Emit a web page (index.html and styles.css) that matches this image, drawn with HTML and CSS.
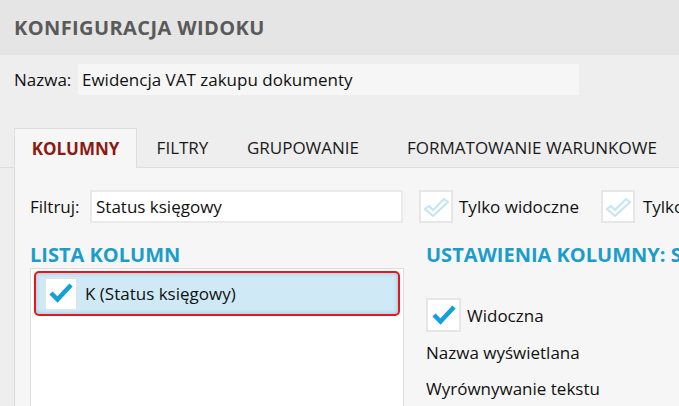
FILE: index.html
```html
<!DOCTYPE html>
<html lang="pl">
<head>
<meta charset="utf-8">
<link rel="stylesheet" href="styles.css">
</head>
<body>
<div class="header"><h1 class="title">KONFIGURACJA WIDOKU</h1></div>
<div class="name-row">
  <span class="label name-label">Nazwa:</span>
  <div class="name-input">Ewidencja VAT zakupu dokumenty</div>
</div>
<div class="tabs">
  <div class="tab active">KOLUMNY</div>
  <div class="tab">FILTRY</div>
  <div class="tab">GRUPOWANIE</div>
  <div class="tab last">FORMATOWANIE WARUNKOWE</div>
</div>
<div class="panel">
  <div class="filter-row">
    <span class="label filter-label">Filtruj:</span>
    <div class="filter-input">Status księgowy</div>
    <div class="checkbox empty">
      <svg viewBox="0 0 34 33" width="34" height="33"><path d="M6 19 L10 16 L14 20 L25 9 L29 12 L14 26 Z" fill="none" stroke="#c2e5f5" stroke-width="2" stroke-linejoin="miter"/></svg>
    </div>
    <span class="cb-label">Tylko widoczne</span>
    <div class="checkbox empty second">
      <svg viewBox="0 0 34 33" width="34" height="33"><path d="M6 19 L10 16 L14 20 L25 9 L29 12 L14 26 Z" fill="none" stroke="#c2e5f5" stroke-width="2" stroke-linejoin="miter"/></svg>
    </div>
    <span class="cb-label">Tylko</span>
  </div>
  <div class="columns">
    <div class="col-left">
      <h2 class="section">LISTA KOLUMN</h2>
      <div class="list">
        <div class="list-row">
          <div class="checkbox small">
            <svg viewBox="0 0 32 32" width="32" height="32"><path d="M6 15 L12.5 21.5 L26 7" fill="none" stroke="#139fdc" stroke-width="4.5"/></svg>
          </div>
          <span class="row-text">K (Status księgowy)</span>
        </div>
      </div>
    </div>
    <div class="col-right">
      <h2 class="section">USTAWIENIA KOLUMNY: S</h2>
      <div class="visible-row">
        <div class="checkbox">
          <svg viewBox="0 0 34 33" width="34" height="33"><path d="M7 16 L13.5 22.5 L27 8" fill="none" stroke="#139fdc" stroke-width="4.5"/></svg>
        </div>
        <span class="cb-label">Widoczna</span>
      </div>
      <div class="field">Nazwa wyświetlana</div>
      <div class="field">Wyrównywanie tekstu</div>
    </div>
  </div>
</div>
</body>
</html>
```
FILE: styles.css
```css
html, body {
  margin: 0;
  padding: 0;
}
body {
  width: 679px;
  height: 406px;
  overflow: hidden;
  background: #eeeeee;
  font-family: "Open Sans", "Noto Sans", sans-serif;
  color: #111;
  font-size: 17px;
}
.header {
  height: 55px;
  background: #e5e5e5;
  display: flex;
  align-items: center;
  padding-left: 14px;
}
.title {
  margin: 0;
  font-size: 20px;
  font-weight: 700;
  color: #5a5a5a;
  letter-spacing: 0.4px;
}
.name-row {
  display: flex;
  align-items: center;
  padding: 9px 0 0 14px;
}
.label {
  font-size: 17px;
  flex: none;
}
.name-label {
  width: 64px;
}
.name-input {
  width: 497px;
  height: 31px;
  background: #f6f6f6;
  display: flex;
  align-items: center;
  padding-left: 4px;
  font-size: 17px;
  white-space: nowrap;
}
.tabs {
  margin-top: 33px;
  padding-left: 14px;
  display: flex;
  height: 39px;
  border-bottom: 1px solid #dddddd;
}
.tab {
  display: flex;
  align-items: center;
  justify-content: center;
  font-size: 17px;
  color: #1a1a1a;
  white-space: nowrap;
  flex: none;
}
.tab:nth-child(1) { width: 121px; }
.tab:nth-child(2) { width: 91px; }
.tab:nth-child(3) { width: 150px; }
.tab.last {
  flex: 1;
  justify-content: flex-start;
  padding-left: 29px;
  overflow: hidden;
}
.tab.active {
  background: #f6f6f6;
  border: 1px solid #dddddd;
  border-bottom: none;
  margin-bottom: -1px;
  color: #8b1a12;
  font-weight: 700;
}
.panel {
  margin-left: 14px;
  border-left: 1px solid #dddddd;
  background: #f6f6f6;
  height: 216px;
  padding: 22px 0 0 15px;
  overflow: hidden;
}
.filter-row {
  display: flex;
  align-items: center;
  height: 33px;
}
.filter-label {
  width: 60px;
}
.filter-input {
  width: 305px;
  height: 29px;
  background: #ffffff;
  border: 2px solid #e9e9e9;
  display: flex;
  align-items: center;
  padding-left: 4px;
  font-size: 17px;
  flex: none;
}
.checkbox {
  box-sizing: border-box;
  width: 34px;
  height: 33px;
  background: #ffffff;
  border: 2px solid #e6e6e6;
  display: flex;
  align-items: center;
  justify-content: center;
  flex: none;
}
.checkbox svg {
  display: block;
  flex: none;
}
.checkbox.empty {
  margin-left: 16px;
}
.checkbox.second {
  margin-left: 22px;
}
.cb-label {
  margin-left: 6px;
  font-size: 17px;
  white-space: nowrap;
}
.checkbox.second + .cb-label {
  margin-left: 8px;
}
.columns {
  display: flex;
  margin-top: 18px;
  gap: 22px;
}
.col-left {
  width: 374px;
  flex: none;
}
.col-right {
  flex: none;
  white-space: nowrap;
}
.section {
  margin: 0;
  height: 27px;
  font-size: 20px;
  font-weight: 700;
  color: #1b9dcb;
  line-height: 27px;
}
.list {
  box-sizing: border-box;
  height: 138px;
  background: #ffffff;
  border: 1px solid #dddddd;
  border-bottom: none;
  padding: 2px 3px 0 3px;
}
.list-row {
  height: 45px;
  box-sizing: border-box;
  border: 2px solid #e8161c;
  border-radius: 5px;
  background: #cfeaf6;
  box-shadow: inset 0 0 4px rgba(80, 140, 170, 0.45);
  display: flex;
  align-items: center;
  padding-left: 9px;
}
.checkbox.small {
  width: 32px;
  height: 32px;
  border: 1px solid #e3e3e3;
}
.row-text {
  margin-left: 8px;
  font-size: 17px;
}
.visible-row {
  display: flex;
  align-items: center;
  margin-top: 30px;
}
.visible-row .checkbox {
  width: 35px;
  height: 34px;
}
.field {
  font-size: 17px;
  height: 36px;
  line-height: 36px;
}
.visible-row + .field {
  margin-top: 3px;
}
```
